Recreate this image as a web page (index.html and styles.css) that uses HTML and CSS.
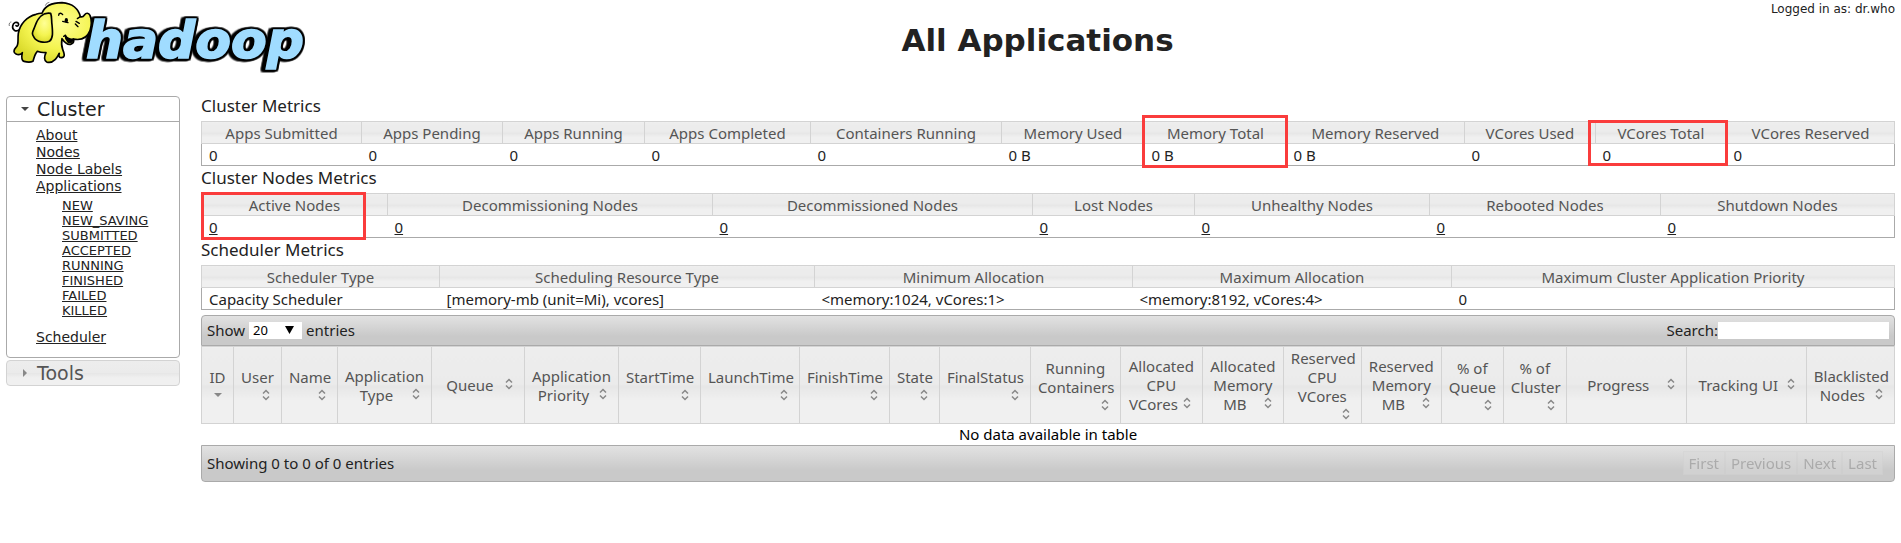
FILE: index.html
```html
<!DOCTYPE html>
<html lang="en">
<head>
<meta charset="utf-8">
<title>All Applications</title>
<link rel="stylesheet" href="styles.css">
</head>
<body>
<header class="header">
  <a class="logo" href="#" aria-label="Apache Hadoop home">
    <svg width="320" height="80" viewBox="0 0 960 240">
      <defs>
        <radialGradient id="hide" cx="0.6" cy="0.35" r="0.7">
          <stop offset="0" stop-color="#ffff96"/>
          <stop offset="0.6" stop-color="#f4f450"/>
          <stop offset="1" stop-color="#d8d828"/>
        </radialGradient>
      </defs>
      <text class="logo-word" x="258" y="174">hadoop</text>
      <g fill="url(#hide)" stroke="#000" stroke-width="5" stroke-linejoin="round" stroke-linecap="round">
        <path d="M60 88C48 98 36 90 38 78C40 67 50 64 55 70C58 76 52 81 48 77" fill="none"/>
        <path d="M108 43C80 50 60 72 55 100C52 120 58 134 48 142C40 150 40 158 48 162C54 165 62 164 67 158C64 172 64 182 72 184C82 187 92 187 99 184C102 174 104 162 112 154C120 158 128 158 138 158C132 170 132 182 140 186C148 189 158 186 166 178C172 172 174 166 178 160C174 172 180 174 188 172C196 170 192 158 188 148C184 138 184 128 186 116C196 130 206 136 214 132C222 128 222 122 220 117C244 122 262 112 270 92C276 72 274 56 270 46C266 38 258 38 254 44C250 50 246 52 241 50C236 28 218 10 186 8C156 8 134 18 126 40C120 39 114 41 108 43Z"/>
        <path d="M152 40C130 36 114 52 106 76C100 94 92 98 102 112C110 126 134 130 148 124C160 116 158 96 156 74C154 60 156 50 152 40Z"/>
        <path d="M196 106C200 114 210 120 220 117C218 126 212 130 204 126C198 120 196 112 196 106Z" fill="#000"/>
      </g>
      <g fill="none" stroke="#000" stroke-width="4" stroke-linecap="round">
        <path d="M176 46C176 38 184 38 188 44M188 64L204 68M241 50L232 56M228 64L238 70M226 72L234 80M196 106L191 109"/>
      </g>
      <path d="M136 17C138 10 144 8 148 7M28 78C26 70 30 66 34 66" fill="none" stroke="#777" stroke-width="3"/>
      <ellipse cx="199" cy="61" rx="5" ry="7"/>
    </svg>
  </a>
  <h1 class="title">All Applications</h1>
  <div class="user">Logged in as: dr.who</div>
</header>
<div class="layout">
  <nav class="sidebar">
    <section class="panel">
      <h3 class="panel-title panel-title-open"><svg class="arrow" width="16" height="16" viewBox="0 0 16 16"><path d="M4 6h8l-4 4z"/></svg>Cluster</h3>
      <ul class="links">
        <li><a href="#">About</a></li>
        <li><a href="#">Nodes</a></li>
        <li><a href="#">Node Labels</a></li>
        <li><a href="#">Applications</a>
          <ul class="states">
            <li><a href="#">NEW</a></li>
            <li><a href="#">NEW_SAVING</a></li>
            <li><a href="#">SUBMITTED</a></li>
            <li><a href="#">ACCEPTED</a></li>
            <li><a href="#">RUNNING</a></li>
            <li><a href="#">FINISHED</a></li>
            <li><a href="#">FAILED</a></li>
            <li><a href="#">KILLED</a></li>
          </ul>
        </li>
        <li><a href="#">Scheduler</a></li>
      </ul>
    </section>
    <h3 class="panel-title panel-title-closed glass"><svg class="arrow" width="16" height="16" viewBox="0 0 16 16"><path d="M6 4v8l4-4z"/></svg>Tools</h3>
  </nav>
  <main class="main">
    <h2 class="caption">Cluster Metrics</h2>
    <table class="metrics">
      <colgroup><col class="w160"><col class="w141"><col class="w142"><col class="w166"><col class="w191"><col class="w143"><col class="w142"><col class="w178"><col class="w131"><col class="w131"><col class="w168"></colgroup>
      <thead><tr><th>Apps Submitted</th><th>Apps Pending</th><th>Apps Running</th><th>Apps Completed</th><th>Containers Running</th><th>Memory Used</th><th class="marked mark-memory">Memory Total</th><th>Memory Reserved</th><th>VCores Used</th><th class="marked mark-vcores">VCores Total</th><th>VCores Reserved</th></tr></thead>
      <tbody><tr><td>0</td><td>0</td><td>0</td><td>0</td><td>0</td><td>0 B</td><td>0 B</td><td>0 B</td><td>0</td><td>0</td><td>0</td></tr></tbody>
    </table>
    <h2 class="caption">Cluster Nodes Metrics</h2>
    <table class="metrics">
      <colgroup><col class="w186"><col class="w325"><col class="w320"><col class="w162"><col class="w235"><col class="w231"><col class="w234"></colgroup>
      <thead><tr><th class="marked mark-nodes">Active Nodes</th><th>Decommissioning Nodes</th><th>Decommissioned Nodes</th><th>Lost Nodes</th><th>Unhealthy Nodes</th><th>Rebooted Nodes</th><th>Shutdown Nodes</th></tr></thead>
      <tbody><tr><td><a href="#">0</a></td><td><a href="#">0</a></td><td><a href="#">0</a></td><td><a href="#">0</a></td><td><a href="#">0</a></td><td><a href="#">0</a></td><td><a href="#">0</a></td></tr></tbody>
    </table>
    <h2 class="caption">Scheduler Metrics</h2>
    <table class="metrics">
      <colgroup><col class="w238"><col class="w375"><col class="w318"><col class="w319"><col class="w443"></colgroup>
      <thead><tr><th>Scheduler Type</th><th>Scheduling Resource Type</th><th>Minimum Allocation</th><th>Maximum Allocation</th><th>Maximum Cluster Application Priority</th></tr></thead>
      <tbody><tr><td>Capacity Scheduler</td><td>[memory-mb (unit=Mi), vcores]</td><td>&lt;memory:1024, vCores:1&gt;</td><td>&lt;memory:8192, vCores:4&gt;</td><td>0</td></tr></tbody>
    </table>
    <div class="bar bar-top">
      <label class="length">Show <span class="select-wrap"><select class="select"><option>20</option><option>40</option></select><svg class="caret" width="9" height="8" viewBox="0 0 9 8"><path d="M0 0h9L4.500 8z"/></svg></span> entries</label>
      <label class="filter">Search:<input class="search" type="text"></label>
    </div>
    <table class="apps">
      <colgroup><col class="w32"><col class="w48"><col class="w56"><col class="w94"><col class="w93"><col class="w94"><col class="w82"><col class="w99"><col class="w90"><col class="w50"><col class="w91"><col class="w90"><col class="w82"><col class="w81"><col class="w78"><col class="w80"><col class="w62"><col class="w63"><col class="w120"><col class="w120"><col class="w88"></colgroup>
      <thead><tr>
        <th><div class="sort">ID<svg class="icon" viewBox="0 0 16 16"><path class="solid" d="M4 6h8l-4 4z"/></svg></div></th>
        <th><div class="sort">User<svg class="icon" viewBox="0 0 16 16"><use href="#both"/></svg></div></th>
        <th><div class="sort">Name<svg class="icon" viewBox="0 0 16 16"><use href="#both"/></svg></div></th>
        <th><div class="sort">Application Type<svg class="icon" viewBox="0 0 16 16"><use href="#both"/></svg></div></th>
        <th><div class="sort">Queue<svg class="icon" viewBox="0 0 16 16"><use href="#both"/></svg></div></th>
        <th><div class="sort">Application Priority<svg class="icon" viewBox="0 0 16 16"><use href="#both"/></svg></div></th>
        <th><div class="sort">StartTime<svg class="icon" viewBox="0 0 16 16"><use href="#both"/></svg></div></th>
        <th><div class="sort">LaunchTime<svg class="icon" viewBox="0 0 16 16"><use href="#both"/></svg></div></th>
        <th><div class="sort">FinishTime<svg class="icon" viewBox="0 0 16 16"><use href="#both"/></svg></div></th>
        <th><div class="sort">State<svg class="icon" viewBox="0 0 16 16"><use href="#both"/></svg></div></th>
        <th><div class="sort">FinalStatus<svg class="icon" viewBox="0 0 16 16"><use href="#both"/></svg></div></th>
        <th><div class="sort">Running Containers<svg class="icon" viewBox="0 0 16 16"><use href="#both"/></svg></div></th>
        <th><div class="sort">Allocated CPU VCores<svg class="icon" viewBox="0 0 16 16"><use href="#both"/></svg></div></th>
        <th><div class="sort">Allocated Memory MB<svg class="icon" viewBox="0 0 16 16"><use href="#both"/></svg></div></th>
        <th><div class="sort">Reserved CPU VCores<svg class="icon" viewBox="0 0 16 16"><use href="#both"/></svg></div></th>
        <th><div class="sort">Reserved Memory MB<svg class="icon" viewBox="0 0 16 16"><use href="#both"/></svg></div></th>
        <th><div class="sort">% of Queue<svg class="icon" viewBox="0 0 16 16"><use href="#both"/></svg></div></th>
        <th><div class="sort">% of Cluster<svg class="icon" viewBox="0 0 16 16"><use href="#both"/></svg></div></th>
        <th><div class="sort">Progress<svg class="icon" viewBox="0 0 16 16"><use href="#both"/></svg></div></th>
        <th><div class="sort">Tracking UI<svg class="icon" viewBox="0 0 16 16"><use href="#both"/></svg></div></th>
        <th><div class="sort">Blacklisted Nodes<svg class="icon" viewBox="0 0 16 16"><use href="#both"/></svg></div></th>
      </tr></thead>
      <tbody><tr><td colspan="21">No data available in table</td></tr></tbody>
    </table>
    <div class="bar bar-bottom">
      <span>Showing 0 to 0 of 0 entries</span>
      <div class="pager"><button disabled>First</button><button disabled>Previous</button><button disabled>Next</button><button disabled>Last</button></div>
    </div>
  </main>
</div>
<svg class="defs" width="0" height="0"><defs><g id="both"><path d="M5 6.500L8 3.500L11 6.500M5 9.500L8 12.500L11 9.500"/></g></defs></svg>
</body>
</html>
```
FILE: styles.css
```css
* { box-sizing: border-box; }
body {
  margin: 0;
  background: #fff;
  color: #222;
  font: 15px/19px "Noto Sans", "Open Sans", sans-serif;
}
a { color: inherit; }
h1, h2, h3, ul { margin: 0; padding: 0; font-weight: normal; }
ul { list-style: none; }
.defs { position: absolute; }

.header {
  display: grid;
  grid-template-columns: 320px 1fr 146px;
  height: 80px;
  font-family: "DejaVu Sans", sans-serif;
}
.logo, .logo svg { display: block; }
.logo-word {
  font: italic bold 156px "DejaVu Sans", sans-serif;
  fill: #a0dcff;
  stroke: #a0dcff;
  stroke-width: 5px;
  filter: drop-shadow(5px 0 0 #000) drop-shadow(-5px 0 0 #000) drop-shadow(0 5px 0 #000) drop-shadow(0 -5px 0 #000) drop-shadow(-8px 2px 0 #000);
}
.title {
  padding-top: 21px;
  text-align: center;
  font-size: 31px;
  line-height: 38px;
  font-weight: bold;
}
.user { padding: 1px 6px 0 0; text-align: right; font-size: 12px; line-height: 16px; white-space: nowrap; }

.layout {
  display: grid;
  grid-template-columns: 174px minmax(0, 1fr);
  gap: 21px;
  padding: 16px 6px 0;
}

.sidebar { font-family: "DejaVu Sans", sans-serif; font-size: 14px; line-height: 17px; }
.panel { border: 1px solid #aaa; border-radius: 4px; padding-bottom: 11px; }
.panel-title { display: flex; align-items: center; gap: 4px; padding-left: 10px; font-size: 19px; line-height: 24px; }
.panel-title-open { border-bottom: 1px solid #aaa; }
.panel-title-closed { margin-top: 2px; border: 1px solid #d3d3d3; border-radius: 4px; color: #555; }
.arrow { fill: #444; }
.panel-title-closed .arrow { fill: #888; }
.links { padding: 5px 0 0 29px; }
.states { padding: 3px 0 11px 26px; font-size: 13px; line-height: 15px; }

.glass, .metrics th, .apps th {
  background: linear-gradient(#ededed, #ebebeb 49%, #e6e6e6 50%, #f0f0f0 70%);
}

.caption { height: 25px; font-size: 17px; line-height: 20px; }
.metrics, .apps { width: 100%; table-layout: fixed; border-collapse: collapse; }
.metrics { border: 1px solid #aaa; margin-bottom: 2px; }
.metrics th, .apps th { border: 1px solid #d3d3d3; color: #555; font-weight: normal; }
.metrics th { height: 22px; padding: 1px 0 0; }
.metrics td { height: 22px; padding: 1px 7px 0; }
.marked { position: relative; }
.marked::after { content: ""; position: absolute; border: 3px solid #fa3c3c; }
.mark-memory::after { inset: -7px -2px -25px -3px; }
.mark-vcores::after { inset: -2px -2px -23px -8px; }
.mark-nodes::after { inset: -2px 21px -25px -1px; }

.bar {
  display: flex;
  align-items: center;
  justify-content: space-between;
  border: 1px solid #aaa;
  background: linear-gradient(#e2e2e2, #c9c9c9 70%);
  padding: 0 5px;
}
.bar-top { height: 31px; margin-top: 5px; border-radius: 4px 4px 0 0; }
.bar-bottom { height: 37px; border-radius: 0 0 4px 4px; }
.length, .filter { display: flex; align-items: center; }
.length { gap: 4px; }
.select-wrap { position: relative; display: flex; }
.select { appearance: none; width: 53px; height: 17px; padding: 0 4px; border: 0; border-radius: 0; background: #fff; font: 13px/17px "Noto Sans", sans-serif; }
.caret { position: absolute; right: 8px; top: 4px; pointer-events: none; }
.search { width: 171px; height: 17px; border: 0; padding: 0 2px; background: #fff; }

.apps th { height: 76px; padding: 2px 7px 1px; }
.apps td { height: 21px; padding: 0; text-align: center; color: #000; }
.sort { display: flow-root; }
.icon { float: right; width: 16px; height: 16px; fill: none; stroke: #888; stroke-width: 1.5; }
.icon .solid { fill: #888; stroke: none; }
.pager { display: flex; margin-right: 6px; opacity: 0.5; }
.pager button { height: 24px; padding: 0 5px; border: 1px solid #d3d3d3; background: #dadada; color: #888; font: 15px/20px "Noto Sans", sans-serif; }

/* Column weights shared by the metric and application tables. */
.w32 { width: 1.890%; } .w48 { width: 2.835%; } .w50 { width: 2.953%; } .w56 { width: 3.308%; }
.w62 { width: 3.662%; } .w63 { width: 3.721%; } .w78 { width: 4.607%; } .w80 { width: 4.725%; }
.w81 { width: 4.784%; } .w82 { width: 4.843%; } .w88 { width: 5.198%; } .w90 { width: 5.316%; }
.w91 { width: 5.375%; } .w93 { width: 5.493%; } .w94 { width: 5.552%; } .w99 { width: 5.848%; }
.w120 { width: 7.088%; } .w131 { width: 7.738%; } .w141 { width: 8.328%; } .w142 { width: 8.387%; }
.w143 { width: 8.447%; } .w160 { width: 9.451%; } .w162 { width: 9.569%; } .w166 { width: 9.805%; }
.w168 { width: 9.923%; } .w178 { width: 10.514%; } .w186 { width: 10.986%; } .w191 { width: 11.282%; }
.w231 { width: 13.644%; } .w234 { width: 13.822%; } .w235 { width: 13.881%; } .w238 { width: 14.058%; }
.w318 { width: 18.783%; } .w319 { width: 18.842%; } .w320 { width: 18.901%; } .w325 { width: 19.197%; }
.w375 { width: 22.150%; } .w443 { width: 26.167%; }
```
